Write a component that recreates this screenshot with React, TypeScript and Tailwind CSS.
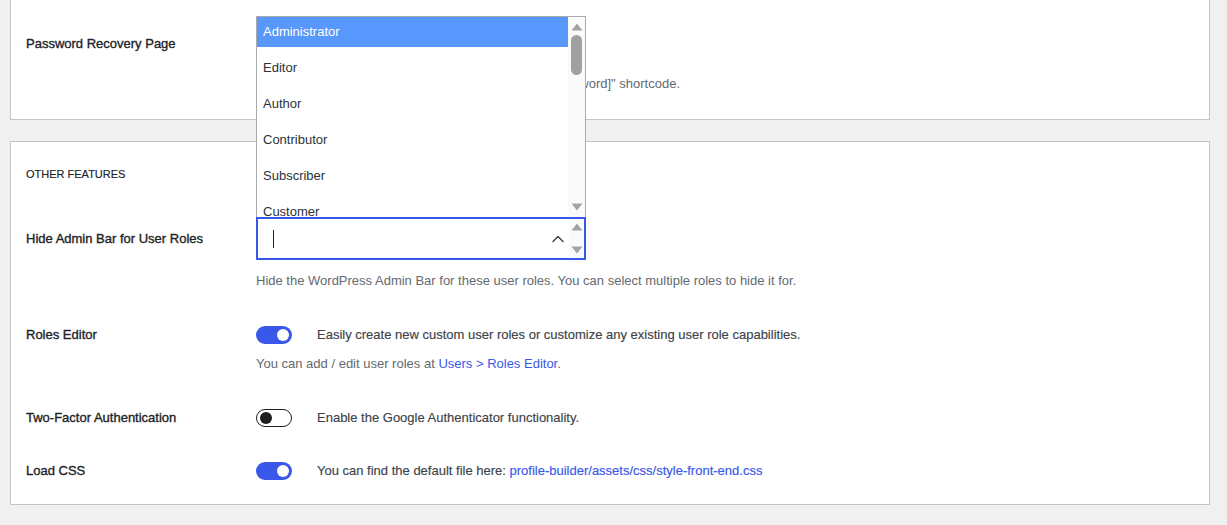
import { ChevronUp } from "lucide-react";

const font = "font-['Liberation_Sans',Arial,sans-serif]";
const semi = "[-webkit-text-stroke:0.35px_currentColor]";
const medium = "[-webkit-text-stroke:0.15px_currentColor]";

function Toggle({ on }: { on: boolean }) {
  return on ? (
    <span className="relative inline-block h-[18px] w-[36px] shrink-0 rounded-full bg-[#3858e9]">
      <span className="absolute right-[3px] top-[3px] h-[12px] w-[12px] rounded-full bg-white" />
    </span>
  ) : (
    <span className="relative inline-block h-[18px] w-[36px] shrink-0 rounded-full border border-[#1e1e1e] bg-white">
      <span className="absolute left-[3px] top-[2px] h-[12px] w-[12px] rounded-full bg-[#1e1e1e]" />
    </span>
  );
}

function Tri({ up }: { up?: boolean }) {
  return (
    <svg width="12" height="8" viewBox="0 0 12 8" className="block">
      <path d={up ? "M6 0.5 L11.5 7.5 L0.5 7.5 Z" : "M0.5 0.5 L11.5 0.5 L6 7.5 Z"} fill="#a3a3a3" />
    </svg>
  );
}

const roles = ["Administrator", "Editor", "Author", "Contributor", "Subscriber", "Customer"];

function RolesDropdown() {
  return (
    <div className="absolute bottom-full left-0 z-10 flex h-[201px] w-[330px] overflow-hidden border border-b-0 border-[#aaaaaa] bg-white">
      <ul className="flex flex-1 flex-col gap-[6px] overflow-hidden">
        {roles.map((r, i) => (
          <li
            key={r}
            className={
              "flex h-[30px] shrink-0 items-center px-[6px] text-[13px] " +
              (i === 0 ? "bg-[#5897fb] text-white" : "text-[#2c3338]")
            }
          >
            {r}
          </li>
        ))}
      </ul>
      <div className="flex w-[17px] flex-col items-center bg-[#fafafa] py-[6px]">
        <Tri up />
        <div className="mt-[4px] h-[40px] w-[11px] rounded-full bg-[#a0a0a0]" />
        <div className="flex-1" />
        <Tri />
      </div>
    </div>
  );
}

function Row({ label, children, className = "" }: { label: string; children: React.ReactNode; className?: string }) {
  return (
    <div className={"flex items-center " + className}>
      <div className={"w-[230px] shrink-0 text-[13px] text-[#1d2327] " + semi}>{label}</div>
      <div className="flex-1">{children}</div>
    </div>
  );
}

export default function App() {
  return (
    <div className={"min-h-[525px] w-full bg-[#f0f0f1] px-[10px] pb-[20px] text-[13px] leading-[20px] " + font} style={{ width: 1227 }}>
      <div className="w-[1200px] border border-t-0 border-[#c3c4c7] bg-white px-[15px] pb-[25px] pt-[34px]">
        <Row label="Password Recovery Page">
          <div className="h-[20px]" />
        </Row>
        <div className="ml-[230px] mt-[20px] text-[#646970]">
          Select the page which contains the "[wppb-recover-password]" shortcode.
        </div>
      </div>

      <div className="mt-[21px] w-[1200px] border border-[#c3c4c7] bg-white px-[15px] pb-[23px] pt-[22px]">
        <div className={"text-[11px] uppercase text-[#1d2327] " + medium}>Other Features</div>

        <Row label="Hide Admin Bar for User Roles" className="mt-[33px]">
          <div className="relative h-[43px] w-[330px]">
            <RolesDropdown />
            <div className="flex h-full w-full items-center border-2 border-[#3858e9] bg-white pl-[15px]">
              <span className="h-[18px] w-px bg-[#1d2327]" />
              <div className="flex-1" />
              <ChevronUp size={20} strokeWidth={1.7} className="mr-[1px] text-[#3c434a]" />
              <div className="flex h-full w-[15px] flex-col items-center justify-between bg-[#fafafa] py-[4px]">
                <Tri up />
                <Tri />
              </div>
            </div>
          </div>
        </Row>
        <div className="ml-[230px] mt-[11px] text-[#646970]">
          Hide the WordPress Admin Bar for these user roles. You can select multiple roles to hide it for.
        </div>

        <Row label="Roles Editor" className="mt-[34px]">
          <div className="flex items-center gap-[25px]">
            <Toggle on />
            <span className={"text-[#3c434a] " + medium}>
              Easily create new custom user roles or customize any existing user role capabilities.
            </span>
          </div>
        </Row>
        <div className="ml-[230px] mt-[9px] text-[#646970]">
          You can add / edit user roles at <a className="text-[#3858e9]">Users &gt; Roles Editor</a>.
        </div>

        <Row label="Two-Factor Authentication" className="mt-[34px]">
          <div className="flex items-center gap-[25px]">
            <Toggle on={false} />
            <span className={"text-[#3c434a] " + medium}>Enable the Google Authenticator functionality.</span>
          </div>
        </Row>

        <Row label="Load CSS" className="mt-[33px]">
          <div className="flex items-center gap-[25px]">
            <Toggle on />
            <span className={"text-[#3c434a] " + medium}>
              You can find the default file here:{" "}
              <a className="text-[#3858e9]">profile-builder/assets/css/style-front-end.css</a>
            </span>
          </div>
        </Row>
      </div>
    </div>
  );
}
